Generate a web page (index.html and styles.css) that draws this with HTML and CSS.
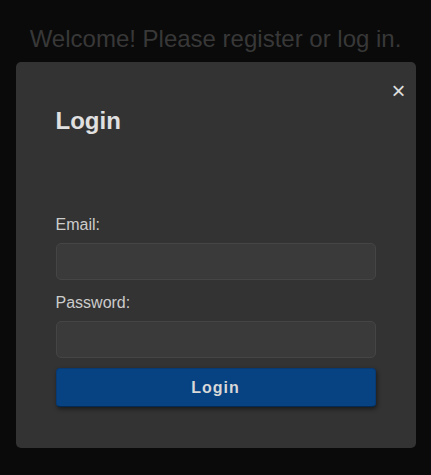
FILE: index.html
```html
<!DOCTYPE html>
<html lang="en">
<head>
<meta charset="utf-8">
<title>Login</title>
<link rel="stylesheet" href="styles.css">
</head>
<body>
<h1 class="welcome">Welcome! Please register or log in.</h1>
<div class="modal">
  <button class="close" type="button" aria-label="Close">&times;</button>
  <h2 class="title">Login</h2>
  <form class="form">
    <label class="label" for="email">Email:</label>
    <input class="input" id="email" type="email">
    <label class="label label-pw" for="password">Password:</label>
    <input class="input" id="password" type="password">
    <button class="submit" type="submit">Login</button>
  </form>
</div>
</body>
</html>
```

FILE: styles.css
```css
html, body {
  margin: 0;
  padding: 0;
  background: #0a0a0a;
  font-family: "Liberation Sans", Arial, sans-serif;
}

.welcome {
  margin: 25px 0 0;
  height: 37px;
  font-size: 24px;
  font-weight: normal;
  line-height: 27.6px;
  text-align: center;
  color: #383838;
}

.modal {
  position: relative;
  box-sizing: border-box;
  width: 400px;
  height: 386px;
  margin: 0 auto;
  padding: 45px 40px 40px;
  background: #333333;
  border-radius: 5px;
}

.close {
  position: absolute;
  right: 10px;
  top: 15px;
  padding: 0;
  border: 0;
  background: none;
  color: #dddddd;
  font-family: "Liberation Sans", Arial, sans-serif;
  font-size: 24px;
  line-height: 28px;
  cursor: pointer;
}

.title {
  margin: 0;
  font-size: 24px;
  font-weight: bold;
  line-height: 27.6px;
  color: #e0e0e0;
}

.form {
  display: flex;
  flex-direction: column;
  margin-top: 81px;
}

.label {
  font-size: 16px;
  line-height: 18.4px;
  color: #cccccc;
  margin-bottom: 8.6px;
}

.label-pw {
  margin-top: 14px;
}

.input {
  box-sizing: border-box;
  width: 100%;
  height: 37px;
  margin: 0;
  padding: 0 10px;
  background: #3a3a3a;
  border: 1px solid #454545;
  border-radius: 5px;
  color: #dddddd;
  font-size: 16px;
}

.submit {
  box-sizing: border-box;
  width: 100%;
  height: 39px;
  margin-top: 10px;
  padding: 2px 0 0;
  background: #074283;
  border: 1px solid #063a74;
  border-bottom-color: #032a55;
  border-radius: 4px;
  box-shadow: 1px 2px 4px rgba(0, 0, 0, 0.5);
  color: #d8d8d8;
  font-family: "Liberation Sans", Arial, sans-serif;
  font-size: 16px;
  font-weight: bold;
  letter-spacing: 1px;
  cursor: pointer;
}
```
